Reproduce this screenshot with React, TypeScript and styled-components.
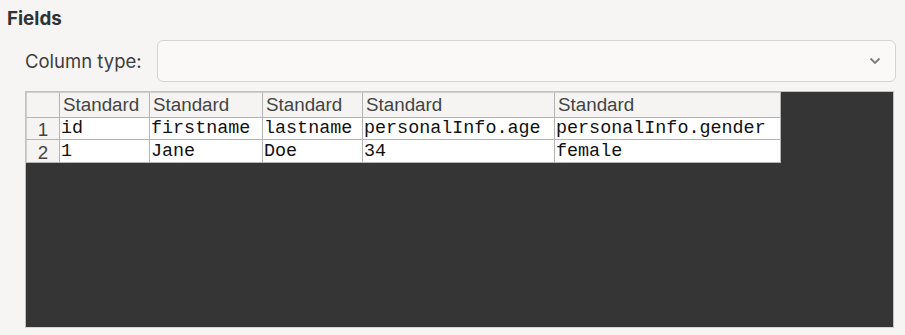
import React from "react";
import styled, { createGlobalStyle } from "styled-components";

const Global = createGlobalStyle`
  html, body { margin: 0; padding: 0; background: #f6f5f4; }
  body { font-family: Inter, "Noto Sans", sans-serif; color: #2e3436; }
`;

const Page = styled.div`
  width: 905px;
  height: 335px;
  box-sizing: border-box;
  padding: 8px 11px 0 7px;
  display: flex;
  flex-direction: column;
`;

const Title = styled.div`
  font-weight: 700;
  font-size: 18.8px;
  line-height: 22px;
  color: #2e3436;
`;

const Body = styled.div`
  padding-left: 18px;
  display: flex;
  flex-direction: column;
`;

const TypeRow = styled.div`
  display: flex;
  align-items: center;
  gap: 15px;
  margin-top: 10px;
  margin-right: -2px;
`;

const Label = styled.span`
  font-size: 18.5px;
  color: #3d3d3d;
`;

const Select = styled.div`
  flex: 1;
  height: 42px;
  box-sizing: border-box;
  border: 1px solid #d6d2ce;
  border-radius: 6px;
  background: #faf9f8;
  display: flex;
  align-items: center;
  justify-content: flex-end;
  padding-right: 14px;
`;

const Sheet = styled.div`
  margin-top: 9px;
  height: 237px;
  box-sizing: border-box;
  border: 1px solid #c4c0bc;
  border-bottom-color: #d8d4d0;
  background: #353535;
  display: flex;
  align-items: flex-start;
`;

const Grid = styled.div`
  display: grid;
  grid-template-columns: 34px 90px 113px 100px 192px 226px;
  grid-template-rows: 26px 22px 23px;
  background: #fff;
`;

const Cell = styled.div<{ $kind: "corner" | "head" | "row" | "data" }>`
  box-sizing: border-box;
  border-right: 1px solid #b4b4b4;
  border-bottom: 1px solid #b4b4b4;
  background: ${(p) => (p.$kind === "data" ? "#ffffff" : "#f5f4f3")};
  display: flex;
  align-items: center;
  overflow: hidden;
  white-space: nowrap;
  justify-content: ${(p) => (p.$kind === "row" ? "center" : "flex-start")};
  padding-left: ${(p) => (p.$kind === "head" ? "3px" : p.$kind === "data" ? "1px" : "0")};
  padding-top: ${(p) => (p.$kind === "row" ? "3px" : "0")};
  font-family: ${(p) =>
    p.$kind === "data" ? '"Liberation Mono", "DejaVu Sans Mono", monospace' : '"Liberation Sans", Arial, sans-serif'};
  font-size: ${(p) => (p.$kind === "data" ? "18.4px" : "18.8px")};
  color: ${(p) => (p.$kind === "data" ? "#111" : "#444")};
  ${(p) => (p.$kind === "corner" || p.$kind === "head" ? "border-top: 1px solid #d0cdca;" : "")}
  ${(p) => (p.$kind === "row" || p.$kind === "corner" ? "border-left: 1px solid #d0cdca;" : "")}
`;

const Chevron = () => (
  <svg width="12" height="8" viewBox="0 0 12 8">
    <path d="M1.5 1.5 L6 6 L10.5 1.5" fill="none" stroke="#7b7b7b" strokeWidth="1.8" />
  </svg>
);

const heads = ["Standard", "Standard", "Standard", "Standard", "Standard"];
const rows = [
  ["id", "firstname", "lastname", "personalInfo.age", "personalInfo.gender"],
  ["1", "Jane", "Doe", "34", "female"],
];

export default function App() {
  return (
    <>
      <Global />
      <Page>
        <Title>Fields</Title>
        <Body>
          <TypeRow>
            <Label>Column type:</Label>
            <Select>
              <Chevron />
            </Select>
          </TypeRow>
          <Sheet>
            <Grid>
              <Cell $kind="corner" />
              {heads.map((h, i) => (
                <Cell key={i} $kind="head">{h}</Cell>
              ))}
              {rows.map((r, ri) => (
                <React.Fragment key={ri}>
                  <Cell $kind="row">{ri + 1}</Cell>
                  {r.map((c, ci) => (
                    <Cell key={ci} $kind="data">{c}</Cell>
                  ))}
                </React.Fragment>
              ))}
            </Grid>
          </Sheet>
        </Body>
      </Page>
    </>
  );
}
